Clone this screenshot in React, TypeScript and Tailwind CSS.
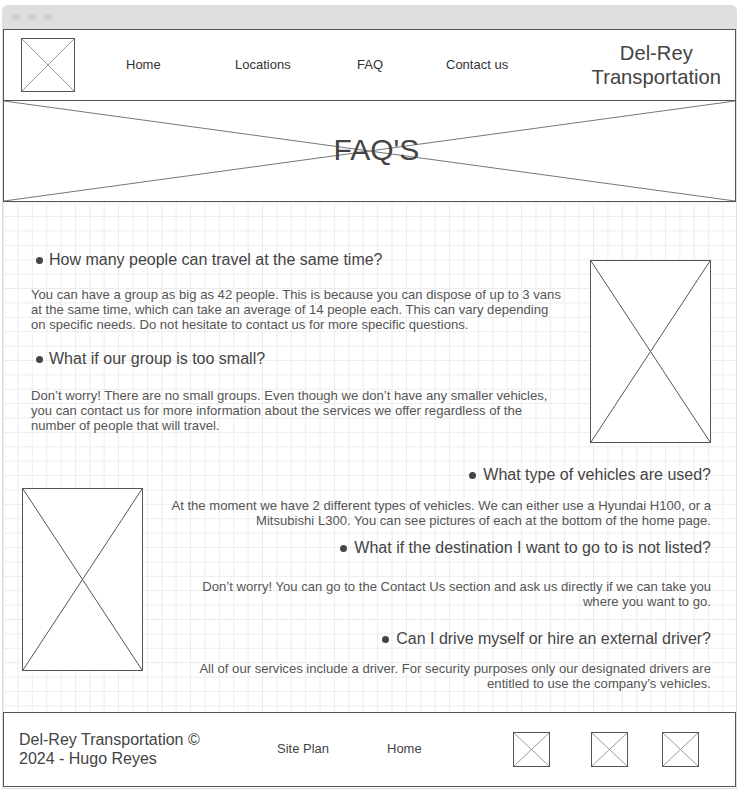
import React from "react";

const lineDark = "#555555";
const lineLight = "#9a9a9a";

function XBox({ className, line }: { className: string; line: string }) {
  return (
    <div className={`relative shrink-0 border border-[#555] bg-white ${className}`}>
      <svg
        className="absolute inset-0 h-full w-full"
        viewBox="0 0 100 100"
        preserveAspectRatio="none"
      >
        <line x1="0" y1="0" x2="100" y2="100" stroke={line} strokeWidth="1" vectorEffect="non-scaling-stroke" />
        <line x1="100" y1="0" x2="0" y2="100" stroke={line} strokeWidth="1" vectorEffect="non-scaling-stroke" />
      </svg>
    </div>
  );
}

function Question({ text, right = false, className = "" }: { text: string; right?: boolean; className?: string }) {
  return (
    <div
      className={`flex items-center text-[16px] leading-[20px] text-[#444] ${
        right ? "justify-end gap-[7px]" : "gap-[6px] pl-[5px]"
      } ${className}`}
    >
      <span className="h-[7px] w-[7px] shrink-0 rounded-full bg-[#444]" />
      <span>{text}</span>
    </div>
  );
}

function Answer({ children, className = "" }: { children: React.ReactNode; className?: string }) {
  return <p className={`text-[13.1px] leading-[15px] text-[#555] ${className}`}>{children}</p>;
}

export default function App() {
  return (
    <div className="min-h-screen bg-white font-['Liberation_Sans',Arial,sans-serif]">
      <div className="ml-[2px] w-[735px] pt-[5px]">
        {/* window bar */}
        <div className="flex h-[24px] items-center gap-[8px] rounded-t-[6px] bg-[#dedede] pl-[10px]">
          <span className="h-[8px] w-[8px] rounded-full bg-[#d0d0d0]" />
          <span className="h-[8px] w-[8px] rounded-full bg-[#d0d0d0]" />
          <span className="h-[8px] w-[8px] rounded-full bg-[#d0d0d0]" />
        </div>

        <div className="border-x border-b border-[#dcdcdc] bg-white bg-[linear-gradient(to_right,#ececec_1px,transparent_1px),linear-gradient(to_bottom,#ececec_1px,transparent_1px)] bg-[size:14.4px_14.4px] pb-[1px]">
          {/* header */}
          <header className="flex h-[72px] items-center border border-[#555] bg-white text-[13px] text-[#333]">
            <XBox className="ml-[17px] h-[54px] w-[54px]" line={lineLight} />
            <nav className="ml-[51px] flex">
              <a className="w-[109px]">Home</a>
              <a className="w-[122px]">Locations</a>
              <a className="w-[89px]">FAQ</a>
              <a className="w-[100px]">Contact us</a>
            </nav>
            <div className="ml-auto mr-[14px] text-center text-[20.2px] leading-[24px] text-[#444]">
              Del-Rey
              <br />
              Transportation
            </div>
          </header>

          {/* hero */}
          <section className="relative flex h-[101px] items-center justify-center border-x border-b border-[#555] bg-white pb-[3px] pl-[14px]">
            <svg className="absolute inset-0 h-full w-full" viewBox="0 0 100 100" preserveAspectRatio="none">
              <line x1="0" y1="0" x2="100" y2="100" stroke="#777" strokeWidth="1" vectorEffect="non-scaling-stroke" />
              <line x1="100" y1="0" x2="0" y2="100" stroke="#777" strokeWidth="1" vectorEffect="non-scaling-stroke" />
            </svg>
            <h1 className="relative text-[30px] leading-[34px] text-[#444]">FAQ'S</h1>
          </section>

          {/* content */}
          <main className="h-[510px]">
            <div className="flex items-start pl-[28px] pr-[25px] pt-[48px]">
              <div className="w-[556px]">
                <Question text="How many people can travel at the same time?" />
                <Answer className="mt-[17px]">
                  You can have a group as big as 42 people. This is because you can dispose of up to 3 vans
                  <br />
                  at the same time, which can take an average of 14 people each. This can vary depending
                  <br />
                  on specific needs. Do not hesitate to contact us for more specific questions.
                </Answer>
                <Question text="What if our group is too small?" className="mt-[17px]" />
                <Answer className="mt-[19px]">
                  Don’t worry! There are no small groups. Even though we don’t have any smaller vehicles,
                  <br />
                  you can contact us for more information about the services we offer regardless of the
                  <br />
                  number of people that will travel.
                </Answer>
              </div>
              <XBox className="ml-auto mt-[10px] h-[183px] w-[121px]" line={lineDark} />
            </div>

            <div className="mt-[22px] flex items-start pl-[19px] pr-[25px]">
              <XBox className="mt-[23px] h-[183px] w-[121px]" line={lineDark} />
              <div className="ml-auto w-[560px] text-right">
                <Question right text="What type of vehicles are used?" />
                <Answer className="mt-[13px]">
                  At the moment we have 2 different types of vehicles. We can either use a Hyundai H100, or a
                  <br />
                  Mitsubishi L300. You can see pictures of each at the bottom of the home page.
                </Answer>
                <Question right text="What if the destination I want to go to is not listed?" className="mt-[10px]" />
                <Answer className="mt-[21px]">
                  Don’t worry! You can go to the Contact Us section and ask us directly if we can take you
                  <br />
                  where you want to go.
                </Answer>
                <Question right text="Can I drive myself or hire an external driver?" className="mt-[20px]" />
                <Answer className="mt-[12px]">
                  All of our services include a driver. For security purposes only our designated drivers are
                  <br />
                  entitled to use the company’s vehicles.
                </Answer>
              </div>
            </div>
          </main>

          {/* footer */}
          <footer className="flex h-[75px] items-center border border-[#555] bg-white">
            <div className="ml-[15px] w-[258px] pb-[2px] text-[16px] leading-[19px] text-[#444]">
              Del-Rey Transportation ©
              <br />
              2024 - Hugo Reyes
            </div>
            <a className="w-[110px] pb-[2px] text-[13px] text-[#444]">Site Plan</a>
            <a className="w-[126px] pb-[2px] text-[13px] text-[#444]">Home</a>
            <XBox className="h-[35px] w-[37px]" line={lineLight} />
            <XBox className="ml-[41px] h-[35px] w-[37px]" line={lineLight} />
            <XBox className="ml-[34px] h-[35px] w-[37px]" line={lineLight} />
          </footer>
        </div>
      </div>
    </div>
  );
}
